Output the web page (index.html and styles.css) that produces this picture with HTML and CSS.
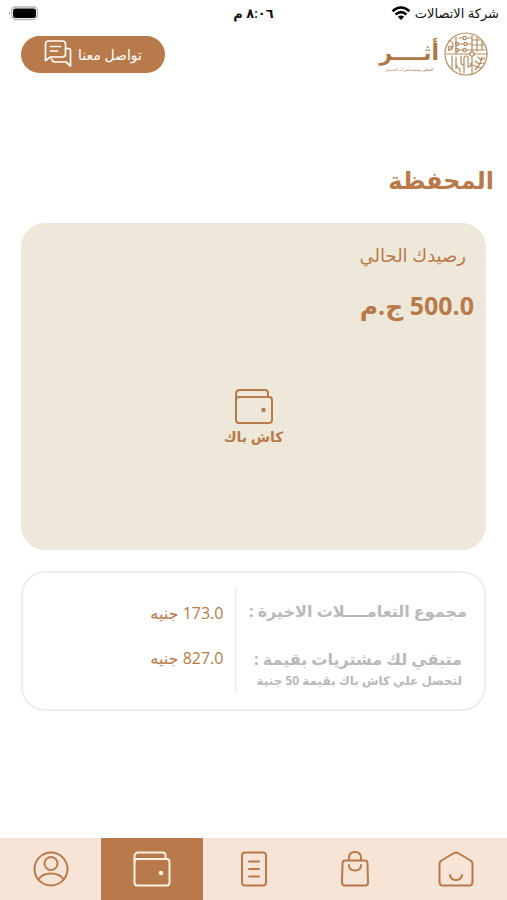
FILE: index.html
```html
<!DOCTYPE html>
<html lang="ar" dir="rtl">
<head>
<meta charset="utf-8">
<meta name="viewport" content="width=device-width, initial-scale=1">
<title>المحفظة</title>
<link rel="stylesheet" href="styles.css">
</head>
<body>
<div class="status">
  <div class="carrier">
    <span>شركة الاتصالات</span>
    <svg width="20" height="14" viewBox="0 0 20 14" aria-hidden="true"><g fill="none" stroke="#000" stroke-width="2.6"><path d="M1.5 5.2Q10-2.2 18.500 5.200"/><path d="M4.600 8.500Q10 3.700 15.400 8.500"/></g><path d="M10 14 6.800 10.700Q10 8.200 13.200 10.700z"/></svg>
  </div>
  <time class="clock">٨:٠٦ م</time>
  <svg class="battery" width="31" height="15" viewBox="0 0 31 15" aria-hidden="true"><rect x="3.500" y="1" width="26" height="12.500" rx="4" fill="none" stroke="#b5b5b5" stroke-width="1.300"/><rect x="5" y="2.500" width="23" height="9.500" rx="2.500"/><path d="M2 5.200Q0 7.200 2 9.200z" fill="#999"/></svg>
</div>

<header class="header">
  <a class="brand" href="#">
    <svg class="emblem" width="44" height="44" viewBox="0 0 44 44" fill="none" stroke="#b58a5c" stroke-width="1.200" stroke-linecap="round" stroke-linejoin="round" aria-hidden="true">
      <circle cx="22" cy="22" r="21"/>
      <path d="M15 6h4m3 0h6M14 12h6m3 0h5M14 18h5m3 0h6M28 3v16M33 5v14M28 8h8M28 13h12M28 18h13M38 9v9M12 5v17M3 22h23m4 0h13"/>
      <path d="M5 8.500q4 1 4 5t-5 5"/>
      <path d="M8 24v13M12 37V25M16 40v-3q-4-2-4-6M17 24v6q0 3 3 3v8M20 33V26q0-2 2-2t2 2v9q3 0 3-4M28 25v17"/>
      <path d="M31 38Q36 34 38 25M35 32l-4-3m4 3 5-1M33 35l-4-2m4 2 5 1M37 28l-3-3m3 3 4-2"/>
      <circle cx="20.500" cy="6" r="1.600"/><circle cx="13" cy="12" r="1.600"/><circle cx="21.500" cy="12" r="1.600"/><circle cx="13" cy="18" r="1.600"/><circle cx="20.500" cy="18" r="1.600"/><circle cx="6" cy="16" r="1.600"/><circle cx="28" cy="22" r="2.200"/>
    </svg>
    <span class="wordmark"><b>أثــــر</b><small>للعطور ومستحضرات التجميل</small></span>
  </a>
  <button class="contact" type="button">
    <span>تواصل معنا</span>
    <svg width="28" height="28" viewBox="0 0 28 28" fill="none" stroke="#fff" stroke-width="1.700" stroke-linejoin="round" stroke-linecap="round" aria-hidden="true"><path d="M1.500 20.500V4q0-3 3-3h14q3 0 3 3v10q0 3-3 3h-12z"/><path d="M6.500 6.500h10M6.500 11h7"/><path d="M22 8.500h2.500q2 0 2 2V26l-4.500-4H11q-2.500 0-3.500-3"/></svg>
  </button>
</header>

<main class="main">
  <h1 class="title">المحفظة</h1>
  <section class="balance">
    <h2 class="label">رصيدك الحالي</h2>
    <p class="amount">500.0 ج.م</p>
    <div class="cashback">
      <svg width="38" height="36" viewBox="0 0 38 36" fill="none" stroke="#b87a4a" stroke-width="2" aria-hidden="true"><rect x="1" y="8" width="36" height="26" rx="3"/><path d="M1 11V5q0-4 4-4h25q3 0 3 3v4"/><circle cx="28.500" cy="21" r="2.200" fill="#b87a4a" stroke="none"/></svg>
      <span>كاش باك</span>
    </div>
  </section>
  <section class="summary">
    <div class="terms">
      <p class="term">مجموع التعامــــلات الاخيرة :</p>
      <div class="remaining">
        <p class="term">متبقي لك مشتريات بقيمة :</p>
        <p class="hint">لتحصل علي كاش باك بقيمة 50 جنية</p>
      </div>
    </div>
    <div class="values">
      <p>173.0 جنيه</p>
      <p>827.0 جنيه</p>
    </div>
  </section>
</main>

<nav class="tabs">
  <a href="#" aria-label="الرئيسية"><svg width="36" height="36" viewBox="0 0 36 36"><path d="M1.500 12.500q0-2 2-3L16 2q2-1 4 0l12.500 7.500q2 1 2 3V31q0 3.500-3.500 3.500H5Q1.500 34.500 1.500 31z"/><path d="M12 24q1 5 6 5t6-5"/></svg></a>
  <a href="#" aria-label="المتجر"><svg width="36" height="36" viewBox="0 0 36 36"><path d="M8 9.500h20q2.500 0 2.500 3l.5 19q0 3-3 3H8q-3 0-3-3l.5-19q0-3 2.500-3z"/><path d="M12 9V7q0-6 6-6t6 6v2M12 14q0 5.500 6 5.500t6-5.500"/></svg></a>
  <a href="#" aria-label="الطلبات"><svg width="36" height="36" viewBox="0 0 36 36"><rect x="6" y="1.500" width="24" height="33" rx="3"/><path d="M13 10.500h10M13 18h10M13 25.500h10"/></svg></a>
  <a class="active" href="#" aria-current="page" aria-label="المحفظة"><svg width="38" height="36" viewBox="0 0 38 36"><rect x="1.500" y="8" width="35" height="26.500" rx="3"/><path d="M1.500 11V5q0-3.500 4-3.500h24q3 0 3 3V8"/><circle class="dot" cx="28" cy="22" r="2.300"/></svg></a>
  <a href="#" aria-label="الحساب"><svg width="36" height="36" viewBox="0 0 36 36"><circle cx="18" cy="18" r="16.500"/><circle cx="18" cy="12.500" r="6.500"/><path d="M5.500 28.500Q9 22.500 18 22.500t12.500 6"/></svg></a>
</nav>
</body>
</html>
```

FILE: styles.css
```css
* { box-sizing: border-box; }
:root { --copper: #b87a4a; }
body {
  margin: 0;
  min-height: 100vh;
  display: flex;
  flex-direction: column;
  background: #fff;
  color: var(--copper);
  font-family: "Open Sans", "DejaVu Sans", sans-serif;
}
h1, h2, p { margin: 0; }
.status {
  display: grid;
  grid-template-columns: 1fr auto 1fr;
  align-items: center;
  height: 26px;
  padding: 0 8px;
  color: #111;
  font-size: 13px;
}
.carrier { display: flex; align-items: center; gap: 4px; white-space: nowrap; }
.clock { font-weight: 600; }
.battery { justify-self: end; }
.header {
  display: flex;
  justify-content: space-between;
  align-items: center;
  padding: 6px 19px 4px 21px;
}
.brand { display: flex; align-items: center; gap: 5px; color: #ae7546; text-decoration: none; }
.wordmark { display: flex; flex-direction: column; align-items: center; white-space: nowrap; }
.wordmark b { font-size: 22px; line-height: 32px; }
.wordmark small { font-size: 4px; line-height: 6px; }
.contact {
  display: flex;
  align-items: center;
  justify-content: center;
  gap: 6px;
  width: 144px;
  height: 37px;
  padding: 0;
  border: 0;
  border-radius: 19px;
  background: var(--copper);
  color: #fff;
  font: inherit;
  font-size: 14px;
}
.main { flex: 1; padding: 80px 21px 24px; }
.title { margin-inline-start: -8px; font-size: 24px; line-height: 40px; }
.balance {
  min-height: 327px;
  margin-top: 23px;
  padding: 16px 12px;
  border-radius: 24px;
  background: #eee8da;
}
.label { padding-inline-start: 8px; font-size: 18px; font-weight: 400; line-height: 32px; }
.amount { margin-top: 16px; font-size: 25px; font-weight: 700; line-height: 36px; }
.cashback {
  display: flex;
  flex-direction: column;
  align-items: center;
  margin-top: 66px;
  font-size: 14px;
  font-weight: 700;
  line-height: 24px;
}
.summary {
  display: flex;
  margin-top: 21px;
  padding: 14px 17px 16px;
  border: 2px solid #eee;
  border-radius: 24px;
}
.terms, .values { display: flex; flex-direction: column; }
.terms { flex: 0 0 54%; padding: 10px 0 4px; gap: 20px; color: #b9b9b9; font-weight: 700; white-space: nowrap; }
.term { font-size: 16px; line-height: 28px; }
.remaining { padding-inline-start: 5px; }
.hint { font-size: 12px; line-height: 16px; }
.values { flex: 1; padding: 12px 12px 0; gap: 17px; border-inline-start: 1px solid #f1ead8; font-size: 16px; line-height: 28px; }
.tabs { display: grid; grid-template-columns: repeat(5, 1fr); height: 62px; background: #f6e5d6; }
.tabs a { display: grid; place-items: center; }
.tabs svg { fill: none; stroke: var(--copper); stroke-width: 2; stroke-linecap: round; stroke-linejoin: round; }
.tabs .active { background: var(--copper); }
.tabs .active svg { stroke: #fff1df; }
.tabs .dot { fill: #fff1df; stroke: none; }
```
